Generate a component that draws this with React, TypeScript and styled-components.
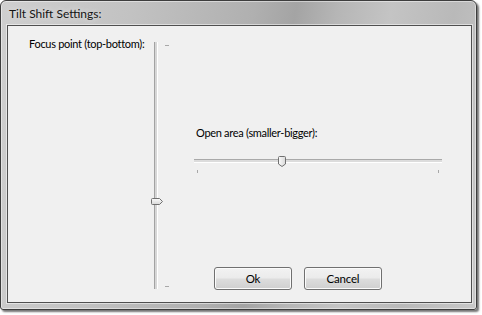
import React from "react";
import styled, { createGlobalStyle } from "styled-components";

const GlobalStyle = createGlobalStyle`
  html, body { margin: 0; padding: 0; background: #ffffff; }
  body { font-family: "Segoe UI", Lato, "Liberation Sans", sans-serif; }
  * { box-sizing: border-box; }
`;

const Page = styled.div`
  width: 482px;
  height: 315px;
  padding: 0;
`;

const Frame = styled.div`
  width: 477px;
  height: 310px;
  display: flex;
  flex-direction: column;
  border: 1px solid #3d3d3d;
  border-radius: 6px 6px 3px 3px;
  background: linear-gradient(
    100deg,
    #cfcfcf 0%,
    #c2c2c2 25%,
    #b0b0b0 48%,
    #a4a4a4 56%,
    #b6b6b6 64%,
    #c4c4c4 74%,
    #b9b9b9 86%,
    #c8c8c8 100%
  );
  box-shadow: inset 0 0 0 1px rgba(255, 255, 255, 0.45),
    2px 2px 2px rgba(0, 0, 0, 0.55);
`;

const TitleBar = styled.div`
  height: 24px;
  display: flex;
  align-items: center;
  padding: 0 0 0 8px;
`;

const Title = styled.span`
  font-size: 12px;
  line-height: 15px;
  color: #141414;
  margin-top: 1px;
  text-shadow: 0 0 6px rgba(255, 255, 255, 0.7);
`;

const Client = styled.div`
  flex: 1;
  margin: 0 4px 6px 6px;
  border: 1px solid #4f4f4f;
  box-shadow: 0 0 0 1px rgba(255, 255, 255, 0.5);
  background: #f0f0f0;
  display: flex;
  padding: 10px 0 0 21px;
`;

const Label = styled.div`
  font-size: 11px;
  letter-spacing: -0.3px;
  line-height: 15px;
  color: #000;
  white-space: nowrap;
`;

const LeftColumn = styled.div`
  width: 119px;
`;

const VSliderBox = styled.div`
  position: relative;
  width: 24px;
  height: 247px;
  margin-top: 6px;
`;

const VTrack = styled.div`
  position: absolute;
  left: 6px;
  top: 0;
  width: 4px;
  height: 100%;
  border-left: 1px solid #a2a2a2;
  border-right: 1px solid #ffffff;
  background: #d6d6d6;
`;

const VTick = styled.div<{ $top: number }>`
  position: absolute;
  left: 17px;
  top: ${(p) => p.$top}px;
  width: 4px;
  height: 1px;
  background: #a8a8a8;
`;

const VThumb = styled.svg`
  position: absolute;
  left: 3px;
  width: 12px;
  height: 7px;
`;

const RightPane = styled.div`
  width: 248px;
  margin-left: 22px;
  padding: 89px 0 12px 0;
  display: flex;
  flex-direction: column;
`;

const RightLabel = styled(Label)`
  padding-left: 2px;
`;

const HSliderBox = styled.div`
  position: relative;
  height: 20px;
  margin-top: 16px;
`;

const HTrack = styled.div`
  position: absolute;
  left: 0;
  top: 3px;
  width: 248px;
  height: 4px;
  border-top: 1px solid #a9a9a9;
  border-bottom: 1px solid #ffffff;
  background: #dcdcdc;
`;

const HTick = styled.div<{ $left: number }>`
  position: absolute;
  top: 14px;
  left: ${(p) => p.$left}px;
  width: 1px;
  height: 3px;
  background: #a8a8a8;
`;

const HThumb = styled.svg`
  position: absolute;
  top: 0;
  width: 8px;
  height: 11px;
`;

const ButtonRow = styled.div`
  margin-top: auto;
  display: flex;
  gap: 12px;
  padding-left: 20px;
`;

const Button = styled.button`
  width: 78px;
  height: 23px;
  padding: 0;
  font-family: inherit;
  font-size: 11.5px;
  letter-spacing: -0.2px;
  color: #000;
  border: 1px solid #707070;
  border-radius: 3px;
  background: linear-gradient(#f2f2f2 0%, #ebebeb 48%, #dddddd 52%, #cfcfcf 100%);
  box-shadow: inset 0 0 0 1px #fbfbfb;
`;

const thumbFill = (id: string, vertical: boolean) => (
  <defs>
    <linearGradient id={id} x1="0" y1="0" x2={vertical ? "0" : "1"} y2={vertical ? "1" : "0"}>
      <stop offset="0" stopColor="#fbfbfb" />
      <stop offset="1" stopColor="#d8d8d8" />
    </linearGradient>
  </defs>
);

const VERT_VALUE = 0.65;
const HORZ_VALUE = 0.35;

export default function App() {
  const vTrackSpan = 247 - 6;
  const vThumbTop = 3 + vTrackSpan * VERT_VALUE - 3.5;
  const hSpan = 244 - 3;
  const hThumbLeft = 3 + hSpan * HORZ_VALUE - 3.5;
  return (
    <>
      <GlobalStyle />
      <Page>
        <Frame>
          <TitleBar>
            <Title>Tilt Shift Settings:</Title>
          </TitleBar>
          <Client>
            <LeftColumn>
              <Label>Focus point (top-bottom):</Label>
            </LeftColumn>
            <VSliderBox>
              <VTrack />
              <VTick $top={3} />
              <VTick $top={244} />
              <VThumb viewBox="0 0 12 7" style={{ top: vThumbTop }}>
                {thumbFill("vg", true)}
                <path
                  d="M0.5,1.5 Q0.5,0.5 1.5,0.5 H8.5 L11.5,3.5 L8.5,6.5 H1.5 Q0.5,6.5 0.5,5.5 Z"
                  fill="url(#vg)"
                  stroke="#707070"
                  strokeWidth="1"
                />
              </VThumb>
            </VSliderBox>
            <RightPane>
              <RightLabel>Open area (smaller-bigger):</RightLabel>
              <HSliderBox>
                <HTrack />
                <HTick $left={3} />
                <HTick $left={244} />
                <HThumb viewBox="0 0 8 11" style={{ left: hThumbLeft }}>
                  {thumbFill("hg", false)}
                  <path
                    d="M0.5,1.5 Q0.5,0.5 1.5,0.5 H6.5 Q7.5,0.5 7.5,1.5 V8 L4,10.5 L0.5,8 Z"
                    fill="url(#hg)"
                    stroke="#707070"
                    strokeWidth="1"
                  />
                </HThumb>
              </HSliderBox>
              <ButtonRow>
                <Button>Ok</Button>
                <Button>Cancel</Button>
              </ButtonRow>
            </RightPane>
          </Client>
        </Frame>
      </Page>
    </>
  );
}
